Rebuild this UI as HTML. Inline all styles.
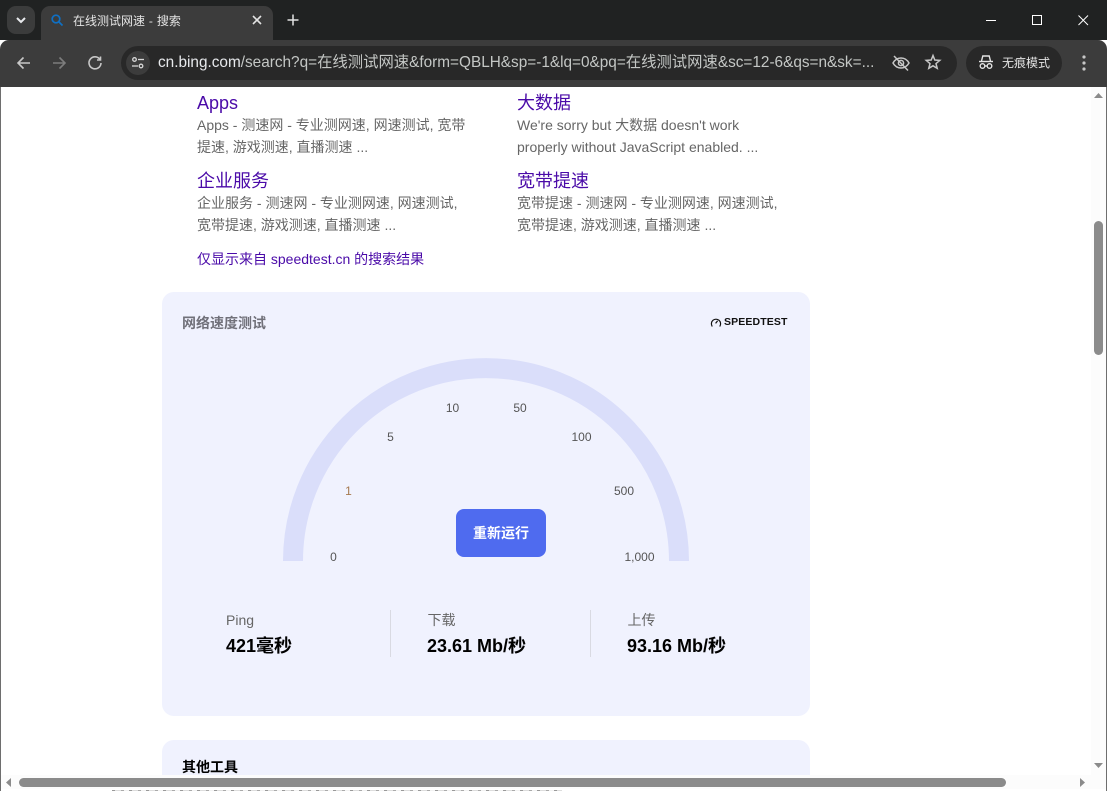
<!DOCTYPE html>
<html lang="zh">
<head>
<meta charset="utf-8">
<title>在线测试网速 - 搜索</title>
<style>
html,body{margin:0;padding:0;width:1107px;height:791px;overflow:hidden;background:#fff}
body{position:relative;font-family:"Liberation Sans","Noto Sans CJK SC",sans-serif}
.a{position:absolute;white-space:nowrap}
.l{color:#4a0aa8;font-size:18px;line-height:24px}
.d{color:#666;font-size:14px;line-height:22px}
.n{color:#555;font-size:12px;line-height:14px;transform:translateX(-50%)}
.lb{color:#666;font-size:14px;line-height:18px}
.v{color:#000;font-size:18px;line-height:22px;font-weight:bold}
.sep{position:absolute;top:610px;width:1px;height:47px;background:#d9dae2}
svg{position:absolute;overflow:visible}
</style>
</head>
<body>
<!-- page content -->
<div class="a l" style="left:197px;top:91px">Apps</div>
<div class="a d" style="left:197px;top:114px">Apps - 测速网 - 专业测网速, 网速测试, 宽带<br>提速, 游戏测速, 直播测速 ...</div>
<div class="a l" style="left:197px;top:169px">企业服务</div>
<div class="a d" style="left:197px;top:192px">企业服务 - 测速网 - 专业测网速, 网速测试,<br>宽带提速, 游戏测速, 直播测速 ...</div>
<div class="a l" style="left:517px;top:91px">大数据</div>
<div class="a d" style="left:517px;top:114px">We're sorry but 大数据 doesn't work<br>properly without JavaScript enabled. ...</div>
<div class="a l" style="left:517px;top:169px">宽带提速</div>
<div class="a d" style="left:517px;top:192px">宽带提速 - 测速网 - 专业测网速, 网速测试,<br>宽带提速, 游戏测速, 直播测速 ...</div>
<div class="a" style="left:197px;top:250px;color:#4a0aa8;font-size:14px;line-height:18px">仅显示来自 speedtest.cn 的搜索结果</div>

<div class="a" style="left:162px;top:292px;width:648px;height:424px;background:#f0f2fe;border-radius:12px"></div>
<div class="a" style="left:182px;top:314px;color:#71717a;font-size:14px;line-height:18px;font-weight:bold">网络速度测试</div>
<svg style="left:710px;top:317px" width="12" height="11" viewBox="0 0 12 11" fill="none" stroke="#111" stroke-width="1.2"><path d="M2.3 9.5A4.6 4.6 0 1 1 9.7 9.5"/><path d="M5.6 6.4L7.6 3.8"/></svg>
<div class="a" style="left:724px;top:316px;color:#111;font-size:10.5px;line-height:13px;font-weight:bold;letter-spacing:.12px">SPEEDTEST</div>

<svg style="left:0;top:0" width="1107" height="791"><path d="M293 561A193 193 0 0 1 679 561" fill="none" stroke="#dadefa" stroke-width="20"/></svg>
<div class="a n" style="left:333.500px;top:550px">0</div>
<div class="a n" style="left:348.500px;top:484px;color:#a5794f">1</div>
<div class="a n" style="left:390.500px;top:430px">5</div>
<div class="a n" style="left:452.500px;top:401px">10</div>
<div class="a n" style="left:520px;top:401px">50</div>
<div class="a n" style="left:581.500px;top:430px">100</div>
<div class="a n" style="left:624px;top:484px">500</div>
<div class="a n" style="left:639.500px;top:550px">1,000</div>
<div class="a" style="left:456px;top:509px;width:90px;height:48px;background:#4f6bef;border-radius:8px;color:#fff;font-size:14px;font-weight:bold;line-height:48px;text-align:center">重新运行</div>

<div class="a lb" style="left:226px;top:611px">Ping</div>
<div class="a v" style="left:226px;top:635px">421毫秒</div>
<div class="sep" style="left:390px"></div>
<div class="a lb" style="left:427.500px;top:611px">下载</div>
<div class="a v" style="left:427px;top:635px">23.61 Mb/秒</div>
<div class="sep" style="left:590px"></div>
<div class="a lb" style="left:627.500px;top:611px">上传</div>
<div class="a v" style="left:627px;top:635px">93.16 Mb/秒</div>

<div class="a" style="left:162px;top:740px;width:648px;height:60px;background:#f0f2fe;border-radius:12px 12px 0 0"></div>
<div class="a" style="left:182px;top:758px;color:#000;font-size:14px;line-height:18px;font-weight:bold">其他工具</div>

<!-- scrollbars -->
<div class="a" style="left:1091px;top:87px;width:15px;height:688px;background:#fcfcfc"></div>
<div class="a" style="left:1px;top:775px;width:1105px;height:14px;background:#fcfcfc"></div>
<div class="a" style="left:1094px;top:221px;width:9px;height:134px;background:#8b8b8b;border-radius:5px"></div>
<div class="a" style="left:19px;top:778px;width:987px;height:9px;background:#8b8b8b;border-radius:5px"></div>
<svg style="left:0;top:0" width="1107" height="791" fill="#8b8b8b"><path d="M1098.500 93L1103 98H1094Z"/><path d="M1098.500 768L1103 763H1094Z"/><path d="M6 782.500L11 778V787Z"/><path d="M1085 782.500L1080 778V787Z"/></svg>
<div class="a" style="left:0;top:789px;width:1107px;height:2px;background:#fff"></div>
<div class="a" style="left:112px;top:790px;width:450px;height:1px;background:repeating-linear-gradient(90deg,#999 0 3px,#ddd 3px 9px,#aaa 9px 12px,#f2f2f2 12px 17px)"></div>
<div class="a" style="left:0;top:87px;width:1px;height:704px;background:#6e6e6e"></div>
<div class="a" style="left:1106px;top:87px;width:1px;height:704px;background:#6e6e6e"></div>

<!-- browser top: tab strip -->
<div class="a" style="left:0;top:0;width:1107px;height:40px;background:#202222"></div>
<div class="a" style="left:7px;top:6px;width:28px;height:28px;background:#3b3c3c;border-radius:9px"></div>
<svg style="left:15px;top:15px" width="12" height="10" fill="none" stroke="#e8eaed" stroke-width="2"><path d="M2 3L6 7L10 3"/></svg>
<div class="a" style="left:41px;top:6px;width:232px;height:40px;background:#3c3c3c;border-radius:9px 9px 0 0"></div>
<svg style="left:50px;top:13px" width="14" height="14" fill="none" stroke="#0f70c4" stroke-width="1.700"><circle cx="6" cy="6" r="3.800"/><path d="M8.800 8.800L12.500 12.500"/></svg>
<div class="a" style="left:73px;top:13px;color:#e3e3e3;font-size:12px;line-height:16px;word-spacing:.6px">在线测试网速 - 搜索</div>
<svg style="left:251px;top:14px" width="12" height="12" fill="none" stroke="#e3e3e3" stroke-width="1.600"><path d="M2 2L10 10M10 2L2 10"/></svg>
<svg style="left:287px;top:14px" width="12" height="12" fill="none" stroke="#e3e3e3" stroke-width="1.500"><path d="M6 0.500V11.500M0.500 6H11.500"/></svg>
<svg style="left:980px;top:10px" width="120" height="20" fill="none" stroke="#fff" stroke-width="1"><path d="M6 10.500H16"/><rect x="52.500" y="5.500" width="9" height="9"/><path d="M98.500 5.500L108 15M108 5.500L98.500 15"/></svg>

<!-- toolbar -->
<div class="a" style="left:0;top:40px;width:1107px;height:47px;background:#3c3c3c;border-radius:9px 9px 0 0"></div>
<div class="a" style="left:41px;top:36px;width:232px;height:6px;background:#3c3c3c"></div>
<svg style="left:15px;top:54px" width="18" height="18" fill="none" stroke="#c7c7c7" stroke-width="1.600"><path d="M15 9H3M8.500 3.500L3 9L8.500 14.500"/></svg>
<svg style="left:50px;top:54px" width="18" height="18" fill="none" stroke="#7d7d7d" stroke-width="1.600"><path d="M3 9H15M9.500 3.500L15 9L9.500 14.500"/></svg>
<svg style="left:86px;top:54px" width="18" height="18" fill="none" stroke="#c7c7c7" stroke-width="1.600"><path d="M14 5.500A6 6 0 1 0 15 9"/><path d="M14.500 2.500V6H11" /></svg>
<div class="a" style="left:121px;top:46px;width:836px;height:34px;background:#282828;border-radius:17px"></div>
<div class="a" style="left:126px;top:51px;width:24px;height:24px;background:#3c3c3c;border-radius:12px"></div>
<svg style="left:131px;top:56px" width="14" height="14" fill="none" stroke="#d6d6d6" stroke-width="1.300"><circle cx="3.500" cy="3.500" r="1.800"/><path d="M7 3.500H13"/><circle cx="10" cy="10" r="1.800"/><path d="M1 10H7"/></svg>
<div class="a" style="left:158px;top:53px;width:722px;overflow:hidden;color:#c4c7c5;font-size:15.350px;line-height:20px"><span style="color:#e8eaed">cn.bing.com</span>/search?q=在线测试网速&amp;form=QBLH&amp;sp=-1&amp;lq=0&amp;pq=在线测试网速&amp;sc=12-6&amp;qs=n&amp;sk=...</div>
<svg style="left:891px;top:53px" width="20" height="20" fill="none" stroke="#c7c7c7" stroke-width="1.500"><path d="M2 10C4 6.500 7 5 10 5S16 6.500 18 10C16 13.500 13 15 10 15S4 13.500 2 10Z"/><circle cx="10" cy="10" r="2.600"/><path d="M3 3L17 17.500"/></svg>
<svg style="left:925px;top:54px" width="16" height="16" fill="none" stroke="#c7c7c7" stroke-width="1.500"><path d="M8 1.500L9.800 6L14.800 6.400L11 9.600L12.200 14.300L8 11.800L3.800 14.300L5 9.600L1.200 6.400L6.200 6Z"/></svg>
<div class="a" style="left:966px;top:46px;width:96px;height:34px;background:#282828;border-radius:17px"></div>
<svg style="left:978px;top:54px" width="16" height="16" fill="none" stroke="#e3e3e3" stroke-width="1.400"><path d="M1 7.500H15"/><path d="M3.500 7L4.800 2H11.200L12.500 7"/><circle cx="4.500" cy="12" r="2.300"/><circle cx="11.500" cy="12" r="2.300"/><path d="M6.800 12H9.200"/></svg>
<div class="a" style="left:1002px;top:55px;color:#e3e3e3;font-size:12px;line-height:16px">无痕模式</div>
<svg style="left:1081px;top:54px" width="6" height="18" fill="#c7c7c7"><circle cx="3" cy="3" r="1.600"/><circle cx="3" cy="9" r="1.600"/><circle cx="3" cy="15" r="1.600"/></svg>
</body>
</html>
